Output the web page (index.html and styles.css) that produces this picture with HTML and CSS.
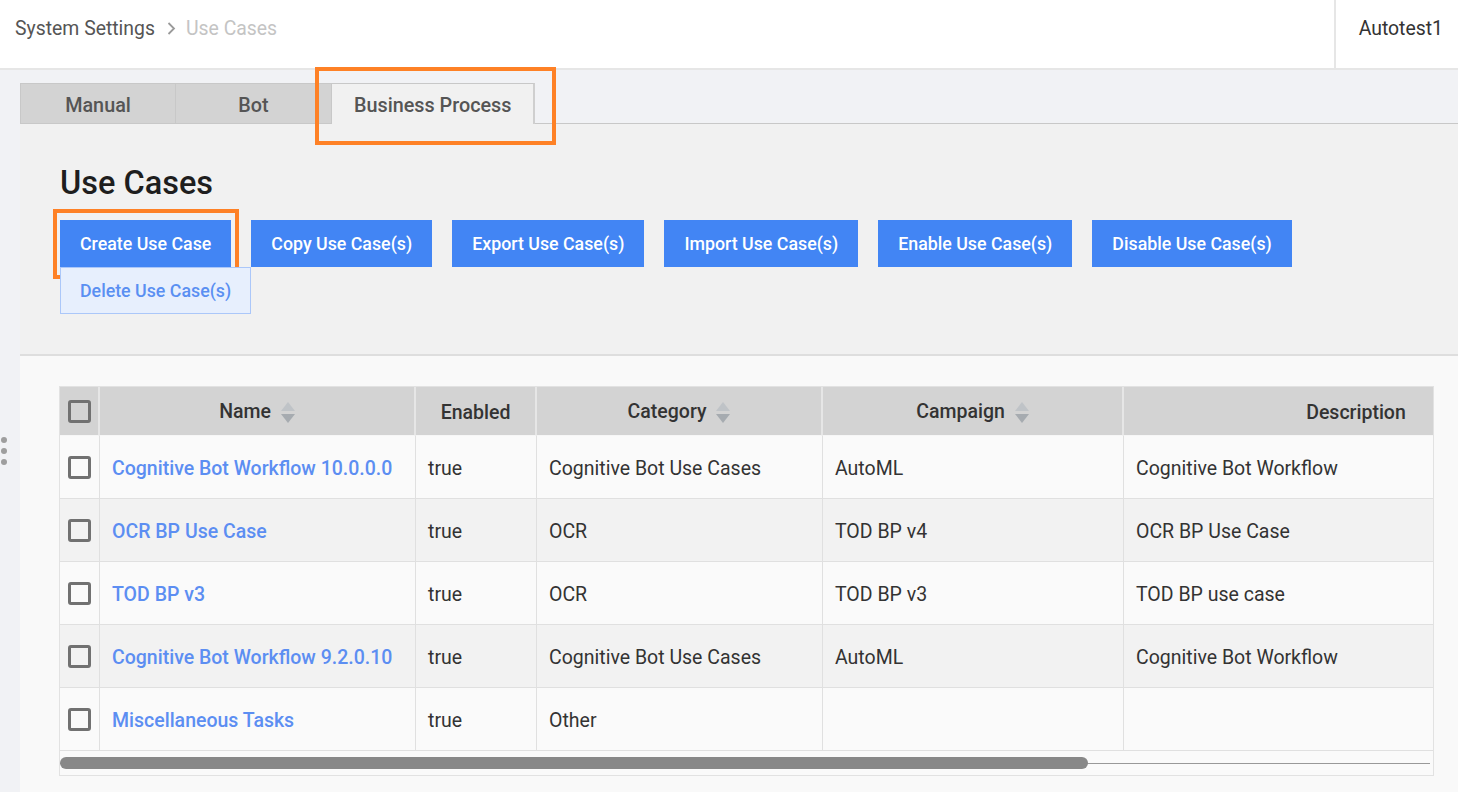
FILE: index.html
```html
<!DOCTYPE html>
<html lang="en">
<head>
    <meta charset="UTF-8">
    <meta name="viewport" content="width=device-width, initial-scale=1.0">
    <title>Use Cases</title>
    <link rel="stylesheet" href="styles.css">
</head>
<body>

    <!-- Top bar -->
    <header class="topbar">
        <nav class="breadcrumb">
            <span class="crumb">System Settings</span>
            <svg class="crumb-sep" width="10" height="15" viewBox="0 0 10 15"><polyline points="2.5,2 8,7.5 2.5,13" fill="none" stroke="#9a9a9a" stroke-width="1.8"/></svg>
            <span class="crumb current">Use Cases</span>
        </nav>
        <div class="user">Autotest1</div>
    </header>

    <div class="layout">
        <aside class="side-handle">
            <span class="dot"></span>
            <span class="dot"></span>
            <span class="dot"></span>
        </aside>

        <main class="main">
            <div class="tabs">
                <button class="tab">Manual</button>
                <button class="tab">Bot</button>
                <button class="tab active">Business Process<span class="mark mark-tab"></span></button>
            </div>

            <section class="toolbar-panel">
                <h1>Use Cases</h1>
                <div class="actions">
                    <button class="btn">Create Use Case<span class="mark mark-btn"></span></button>
                    <button class="btn">Copy Use Case(s)</button>
                    <button class="btn">Export Use Case(s)</button>
                    <button class="btn">Import Use Case(s)</button>
                    <button class="btn">Enable Use Case(s)</button>
                    <button class="btn">Disable Use Case(s)</button>
                    <button class="btn btn-light">Delete Use Case(s)</button>
                </div>
            </section>

            <section class="list-panel">
                <div class="table-wrap">
                    <div class="table-clip">
                        <table class="grid">
                            <colgroup>
                                <col class="c-check">
                                <col class="c-name">
                                <col class="c-enabled">
                                <col class="c-category">
                                <col class="c-campaign">
                                <col class="c-desc">
                                <col class="c-extra">
                            </colgroup>
                            <thead>
                                <tr>
                                    <th class="check"><span class="box"></span></th>
                                    <th>Name <span class="sort"></span></th>
                                    <th>Enabled</th>
                                    <th>Category <span class="sort"></span></th>
                                    <th>Campaign <span class="sort"></span></th>
                                    <th>Description</th>
                                    <th></th>
                                </tr>
                            </thead>
                            <tbody>
                                <tr>
                                    <td class="check"><span class="box"></span></td>
                                    <td><a href="#">Cognitive Bot Workflow 10.0.0.0</a></td>
                                    <td>true</td>
                                    <td>Cognitive Bot Use Cases</td>
                                    <td>AutoML</td>
                                    <td>Cognitive Bot Workflow</td>
                                    <td></td>
                                </tr>
                                <tr>
                                    <td class="check"><span class="box"></span></td>
                                    <td><a href="#">OCR BP Use Case</a></td>
                                    <td>true</td>
                                    <td>OCR</td>
                                    <td>TOD BP v4</td>
                                    <td>OCR BP Use Case</td>
                                    <td></td>
                                </tr>
                                <tr>
                                    <td class="check"><span class="box"></span></td>
                                    <td><a href="#">TOD BP v3</a></td>
                                    <td>true</td>
                                    <td>OCR</td>
                                    <td>TOD BP v3</td>
                                    <td>TOD BP use case</td>
                                    <td></td>
                                </tr>
                                <tr>
                                    <td class="check"><span class="box"></span></td>
                                    <td><a href="#">Cognitive Bot Workflow 9.2.0.10</a></td>
                                    <td>true</td>
                                    <td>Cognitive Bot Use Cases</td>
                                    <td>AutoML</td>
                                    <td>Cognitive Bot Workflow</td>
                                    <td></td>
                                </tr>
                                <tr>
                                    <td class="check"><span class="box"></span></td>
                                    <td><a href="#">Miscellaneous Tasks</a></td>
                                    <td>true</td>
                                    <td>Other</td>
                                    <td></td>
                                    <td></td>
                                    <td></td>
                                </tr>
                            </tbody>
                        </table>
                    </div>
                    <!-- horizontal scrollbar -->
                    <div class="hscroll">
                        <div class="hscroll-thumb"></div>
                    </div>
                </div>
            </section>
        </main>
    </div>

</body>
</html>
```

FILE: styles.css
```css
* {
    box-sizing: border-box;
}

body {
    margin: 0;
    min-height: 100vh;
    display: flex;
    flex-direction: column;
    font-family: Roboto, "Liberation Sans", Arial, sans-serif;
    background-color: #f1f2f5;
    color: #333;
}

button {
    font-family: inherit;
}

/* Top bar */
.topbar {
    height: 70px;
    display: flex;
    background: white;
    border-bottom: 2px solid #e6e6e6;
}

.breadcrumb {
    flex: 1;
    display: flex;
    align-items: center;
    height: 56px;
    padding-left: 15px;
    font-size: 19.4px;
}

.crumb {
    color: #555;
}

.crumb.current {
    color: #c4c4c4;
}

.crumb-sep {
    margin: 0 10px 0 11px;
}

.user {
    display: flex;
    align-items: center;
    height: 56px;
    padding: 0 15px 0 23px;
    border-left: 2px solid #e6e6e6;
    box-sizing: content-box;
    padding-bottom: 12px;
    font-size: 19.4px;
    color: #333;
}

/* Body layout */
.layout {
    flex: 1;
    display: flex;
}

.side-handle {
    width: 20px;
    flex-shrink: 0;
    display: flex;
    flex-direction: column;
    justify-content: center;
    gap: 5px;
    padding: 40px 0 0 1px;
}

.dot {
    width: 6px;
    height: 6px;
    border-radius: 50%;
    background: #9e9e9e;
}

.main {
    flex: 1;
    display: flex;
    flex-direction: column;
    min-width: 0;
}

/* Tabs */
.tabs {
    display: flex;
    align-items: flex-end;
    padding-top: 13px;
    border-bottom: 1px solid #c8c8c8;
}

.tab {
    position: relative;
    height: 40px;
    min-width: 156px;
    padding: 3px 22px 0;
    background: #d3d3d3;
    border: 1px solid #c8c8c8;
    border-bottom: none;
    border-left: none;
    font-size: 19.8px;
    font-weight: 500;
    color: #555;
}

.tab:first-child {
    border-left: 1px solid #c8c8c8;
}

.tab.active {
    height: 41px;
    margin-bottom: -1px;
    min-width: 0;
    background: #f1f1f1;
    border-right: 2px solid #cfcfcf;
}

/* Orange annotation boxes */
.mark {
    position: absolute;
    border: 4px solid #fe8126;
    pointer-events: none;
}

.mark-tab {
    top: -17px;
    left: -17px;
    right: -23px;
    bottom: -21px;
}

.mark-btn {
    top: -11px;
    left: -7px;
    right: -8px;
    bottom: -12px;
}

/* Toolbar panel */
.toolbar-panel {
    background: #f1f1f1;
    padding: 40px 40px 40px 40px;
    border-bottom: 2px solid #dedede;
}

.toolbar-panel h1 {
    margin: 0 0 20px;
    font-size: 32.5px;
    line-height: 38px;
    font-weight: 500;
    color: #1e1e1e;
}

.actions {
    display: flex;
    flex-wrap: wrap;
    column-gap: 20px;
    margin-top: -2px;
}

.btn {
    position: relative;
    height: 47px;
    padding: 0 20px;
    background: #4285f4;
    border: none;
    color: white;
    font-size: 17.8px;
    font-weight: 500;
    cursor: pointer;
}

.btn-light {
    background: #e7effd;
    border: 1px solid #abc7f9;
    color: #5a8ff2;
    padding: 0 19px;
}

/* List panel */
.list-panel {
    flex: 1;
    background: #f9f9f9;
    padding: 30px 24px 16px 39px;
}

.table-wrap {
    border: 1px solid #e2e2e2;
    background: #fafafa;
}

.table-clip {
    overflow: hidden;
}

.hscroll {
    height: 24px;
    margin-right: 3px;
    display: flex;
    align-items: center;
    background: linear-gradient(#999, #999) center / 100% 1px no-repeat;
}

.hscroll-thumb {
    width: 75%;
    height: 12px;
    border-radius: 6px;
    background: #888;
}

.grid {
    width: 1834px;
    table-layout: fixed;
    border-collapse: separate;
    border-spacing: 0;
    font-size: 19.5px;
}

.c-check { width: 40px; }
.c-name { width: 316px; }
.c-enabled { width: 121px; }
.c-category { width: 286px; }
.c-campaign { width: 301px; }
.c-desc { width: 466px; }
.c-extra { width: 304px; }

.grid thead tr {
    height: 49px;
}

.grid th {
    padding: 2px 0 0;
    background: #d3d3d3;
    border-right: 2px solid #e6e6e6;
    border-bottom: 1px solid #f6f6f6;
    font-weight: 500;
    color: #333;
    text-align: center;
    white-space: nowrap;
}

.grid tbody tr {
    height: 63px;
}

.grid tbody tr:nth-child(even) td {
    background: #f2f2f2;
}

.grid td {
    padding: 3px 12px 0;
    border-right: 1px solid #e0e0e0;
    border-bottom: 1px solid #e0e0e0;
    color: #333;
    white-space: nowrap;
}

.grid td.check,
.grid th.check {
    padding: 0;
    text-align: center;
}

.grid a {
    color: #5c8ef2;
    font-weight: 500;
    text-decoration: none;
}

.box {
    display: inline-block;
    width: 23px;
    height: 23px;
    border: 3px solid #717171;
    border-radius: 3px;
    vertical-align: middle;
}

/* Sort arrows */
.sort {
    display: inline-block;
    width: 14px;
    height: 21px;
    margin-left: 5px;
    vertical-align: middle;
    position: relative;
    top: -1px;
}

.sort::before,
.sort::after {
    content: "";
    position: absolute;
    left: 0;
    border-left: 7px solid transparent;
    border-right: 7px solid transparent;
}

.sort::before {
    top: 0;
    border-bottom: 9px solid #bfc3c7;
}

.sort::after {
    bottom: 0;
    border-top: 9px solid #a6abb0;
}
```
